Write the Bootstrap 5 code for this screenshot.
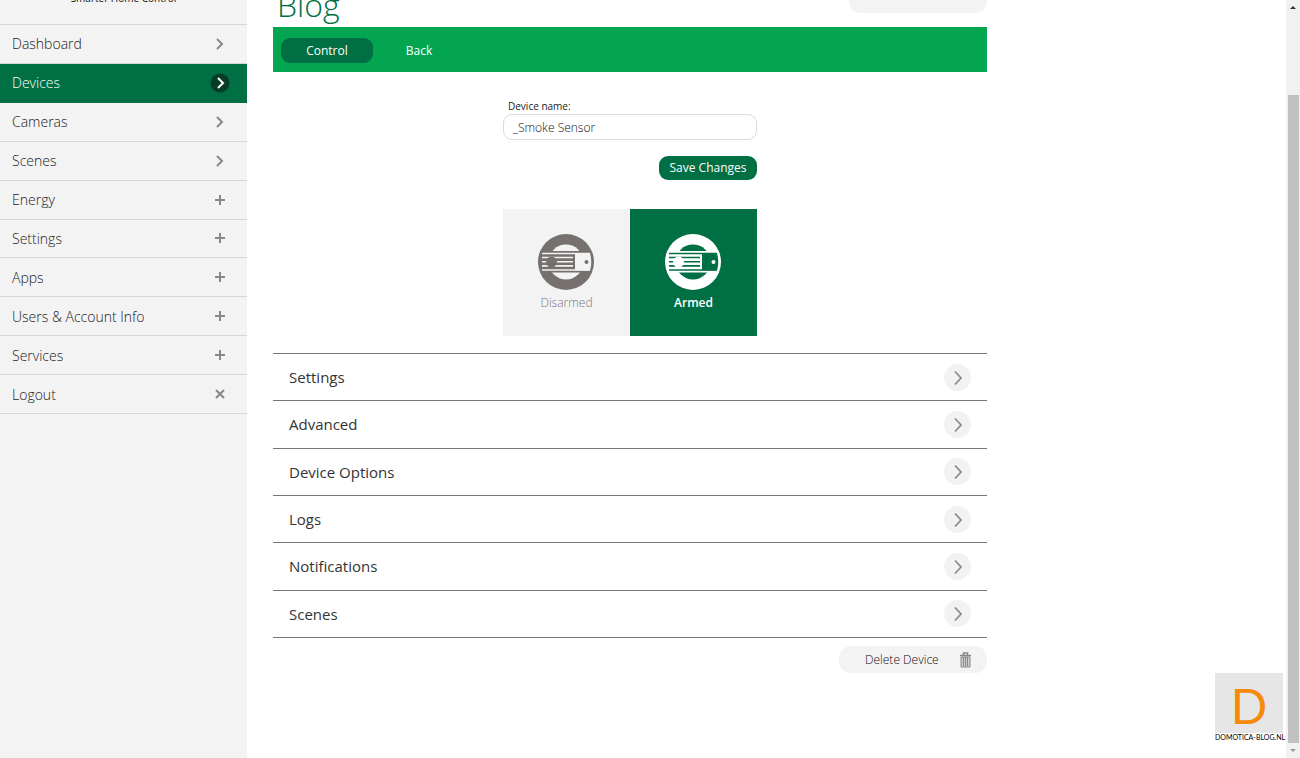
<!DOCTYPE html>
<html lang="en">
<head>
<meta charset="utf-8">
<meta name="viewport" content="width=device-width, initial-scale=1">
<title>Smoke Sensor</title>
<link href="https://cdn.jsdelivr.net/npm/bootstrap@5.3.0/dist/css/bootstrap.min.css" rel="stylesheet">
<style>
  :root { --deep: #006f44; --bright: #04a551; --soft: #f3f3f3; }
  body { font-family: "Open Sans", "Noto Sans", sans-serif; font-size: 13px; color: #333; background: #fff; }
  a { color: inherit; text-decoration: none; }
  .side { width: 247px; background: var(--soft); }
  .tagline { height: 25px; font-size: 10px; line-height: 16px; padding-bottom: 18px; border-bottom: 1px solid #d6d6d6; color: #111; }
  .side-menu { height: 389px; }
  .side-link { padding: 0 17px 0 12px; font-size: 14px; font-weight: 300; border-bottom: 1px solid #d6d6d6; color: #222; }
  .side-link svg { width: 20px; height: 20px; fill: none; stroke: #888; stroke-width: 2; }
  .side-link.current { background: var(--deep); border-color: var(--deep); color: #fff; }
  .side-link.current svg { stroke: #fff; }
  .page { padding-left: 26px; }
  .panel { max-width: 714px; }
  .top { height: 27px; }
  .top h1 { font-size: 32px; line-height: 44px; font-weight: 300; color: var(--deep); padding-left: 4px; }
  .top-btn { width: 138px; height: 27px; margin-bottom: 14px; }
  .pill { background: var(--soft); border: 0; border-radius: 12px; font-size: 12px; font-weight: 300; color: #111; }
  .tabs { height: 45px; background: var(--bright); padding: 2px 8px 0; }
  .tabs a { width: 92px; height: 25px; line-height: 26px; border-radius: 9px; color: #fff; text-align: center; font-size: 12px; }
  .tabs a.current { background: var(--deep); }
  .device { width: 254px; padding-top: 26px; }
  .device label { font-size: 10px; line-height: 16px; padding-left: 5px; color: #222; }
  .device input { height: 26px; font-size: 12px; font-weight: 300; padding: 0 9px; border: 1px solid #dcdcdc; border-radius: 9px; color: #111; }
  .save { width: 98px; height: 24px; margin-top: 16px; border: 0; border-radius: 9px; background: var(--deep); color: #fff; font-size: 12px; }
  .states { margin-top: 29px; }
  .state { height: 127px; border: 0; background: var(--soft); color: #777; font-size: 12px; font-weight: 300; line-height: 18px; padding: 0; --ink: #76716f; --paper: #f3f3f3; }
  .state.current { background: var(--deep); color: #fff; font-weight: 600; --ink: #fff; --paper: #006f44; }
  .state svg { width: 56px; height: 56px; margin-right: 2px; }
  .sections { height: 285px; margin-top: 17px; border-top: 1px solid #777; }
  .sections a { font-size: 15px; color: #333; padding: 0 16px; border-bottom: 1px solid #777; }
  .sections svg { width: 27px; height: 27px; }
  .delete { width: 148px; height: 27px; margin-top: 8px; padding: 0 15px 0 26px; }
  .delete svg { width: 13px; height: 16px; }
  .bar { width: 14px; background: #f1f1f1; padding: 6px 2px; }
  .bar i { width: 0; height: 0; border: 3px solid transparent; }
  .bar .up { border-top: 0; border-bottom-color: #333; }
  .bar .down { border-bottom: 0; border-top-color: #999; }
  .thumb { margin: 86px 0 6px; width: 11px; background: #c1c1c1; }
  .logo-box { right: 17px; bottom: 16px; width: 68px; font-family: Lato, sans-serif; }
  .logo-box .letter { height: 60px; line-height: 65px; background: #e6e6e6; color: #f7890c; font-size: 48px; }
  .logo-box .site { font-size: 7px; line-height: 9px; color: #000; }
</style>
</head>
<body>
<svg width="0" height="0" class="position-absolute">
  <symbol id="next" viewBox="0 0 20 20"><path d="M7 5l5 5-5 5"/></symbol>
  <symbol id="plus" viewBox="0 0 20 20"><path d="M5 10h10M10 5v10"/></symbol>
  <symbol id="close" viewBox="0 0 20 20"><path d="M6 6l8 8M14 6l-8 8"/></symbol>
  <symbol id="round" viewBox="0 0 27 27"><circle cx="13.500" cy="13.500" r="13.500" fill="#f2f2f2"/><path d="M11 7.500l6 6.500-6 6.500" fill="none" stroke="#888" stroke-width="1.700"/></symbol>
  <symbol id="smoke" viewBox="0 0 56 56">
    <circle cx="28" cy="28" r="28" fill="var(--ink)"/>
    <circle cx="28" cy="28" r="17.500" fill="var(--paper)"/>
    <path d="M4 17h48v21.500H4z" fill="var(--ink)"/>
    <path d="M4 19.500h48M4 23.500h31M4 27.700h31M4 31.900h31M4 36h48" stroke="var(--paper)" stroke-width="1.600"/>
    <circle cx="13.500" cy="28" r="5.500" fill="var(--ink)"/>
    <path d="M37 19h15q2.500 9 0 17.500H37z" fill="var(--paper)"/>
    <circle cx="48.500" cy="28" r="2" fill="var(--ink)"/>
  </symbol>
</svg>
<div class="d-flex vh-100 overflow-hidden position-relative">
  <aside class="side flex-shrink-0">
    <div class="tagline d-flex align-items-end justify-content-center overflow-hidden">Smarter Home Control</div>
    <nav class="side-menu d-flex flex-column">
      <a href="#" class="side-link flex-fill d-flex align-items-center justify-content-between">Dashboard<svg><use href="#next"/></svg></a>
      <a href="#" class="side-link current flex-fill d-flex align-items-center justify-content-between">Devices<svg viewBox="0 0 20 20"><circle cx="10" cy="10" r="9.500" fill="#073c28" stroke="none"/><path d="M8 5l5 5-5 5"/></svg></a>
      <a href="#" class="side-link flex-fill d-flex align-items-center justify-content-between">Cameras<svg><use href="#next"/></svg></a>
      <a href="#" class="side-link flex-fill d-flex align-items-center justify-content-between">Scenes<svg><use href="#next"/></svg></a>
      <a href="#" class="side-link flex-fill d-flex align-items-center justify-content-between">Energy<svg><use href="#plus"/></svg></a>
      <a href="#" class="side-link flex-fill d-flex align-items-center justify-content-between">Settings<svg><use href="#plus"/></svg></a>
      <a href="#" class="side-link flex-fill d-flex align-items-center justify-content-between">Apps<svg><use href="#plus"/></svg></a>
      <a href="#" class="side-link flex-fill d-flex align-items-center justify-content-between">Users &amp; Account Info<svg><use href="#plus"/></svg></a>
      <a href="#" class="side-link flex-fill d-flex align-items-center justify-content-between">Services<svg><use href="#plus"/></svg></a>
      <a href="#" class="side-link flex-fill d-flex align-items-center justify-content-between">Logout<svg><use href="#close"/></svg></a>
    </nav>
  </aside>
  <main class="page flex-fill">
    <div class="panel">
      <div class="top d-flex align-items-end justify-content-between overflow-hidden">
        <h1 class="m-0">Blog</h1>
        <div class="top-btn pill"></div>
      </div>
      <nav class="tabs d-flex align-items-center">
        <a href="#" class="current">Control</a>
        <a href="#">Back</a>
      </nav>
      <form class="device mx-auto d-flex flex-column">
        <label for="device-name">Device name:</label>
        <input id="device-name" type="text" value="_Smoke Sensor">
        <button type="button" class="save align-self-end">Save Changes</button>
        <div class="states row g-0">
          <button type="button" class="state col-6 d-flex flex-column align-items-center justify-content-center gap-1"><svg><use href="#smoke"/></svg>Disarmed</button>
          <button type="button" class="state current col-6 d-flex flex-column align-items-center justify-content-center gap-1"><svg><use href="#smoke"/></svg>Armed</button>
        </div>
      </form>
      <div class="sections d-flex flex-column">
        <a href="#" class="flex-fill d-flex align-items-center justify-content-between">Settings<svg><use href="#round"/></svg></a>
        <a href="#" class="flex-fill d-flex align-items-center justify-content-between">Advanced<svg><use href="#round"/></svg></a>
        <a href="#" class="flex-fill d-flex align-items-center justify-content-between">Device Options<svg><use href="#round"/></svg></a>
        <a href="#" class="flex-fill d-flex align-items-center justify-content-between">Logs<svg><use href="#round"/></svg></a>
        <a href="#" class="flex-fill d-flex align-items-center justify-content-between">Notifications<svg><use href="#round"/></svg></a>
        <a href="#" class="flex-fill d-flex align-items-center justify-content-between">Scenes<svg><use href="#round"/></svg></a>
      </div>
      <button type="button" class="delete pill d-flex align-items-center justify-content-between ms-auto">Delete Device
        <svg viewBox="0 0 13 16" fill="none" stroke="#888"><path d="M1 3.500h11M4.500 3V1h4v2" stroke-width="1.500"/><path fill="#ccc" d="M2 5v10h9V5z"/><path d="M4.500 5v9M6.500 5v9M8.500 5v9"/></svg>
      </button>
    </div>
  </main>
  <div class="bar d-flex flex-column align-items-center flex-shrink-0"><i class="up"></i><div class="thumb flex-fill"></div><i class="down"></i></div>
  <div class="logo-box position-absolute text-center">
    <div class="letter">D</div>
    <div class="site text-nowrap">DOMOTICA-BLOG.NL</div>
  </div>
</div>
<script src="https://cdn.jsdelivr.net/npm/bootstrap@5.3.0/dist/js/bootstrap.bundle.min.js"></script>
</body>
</html>
